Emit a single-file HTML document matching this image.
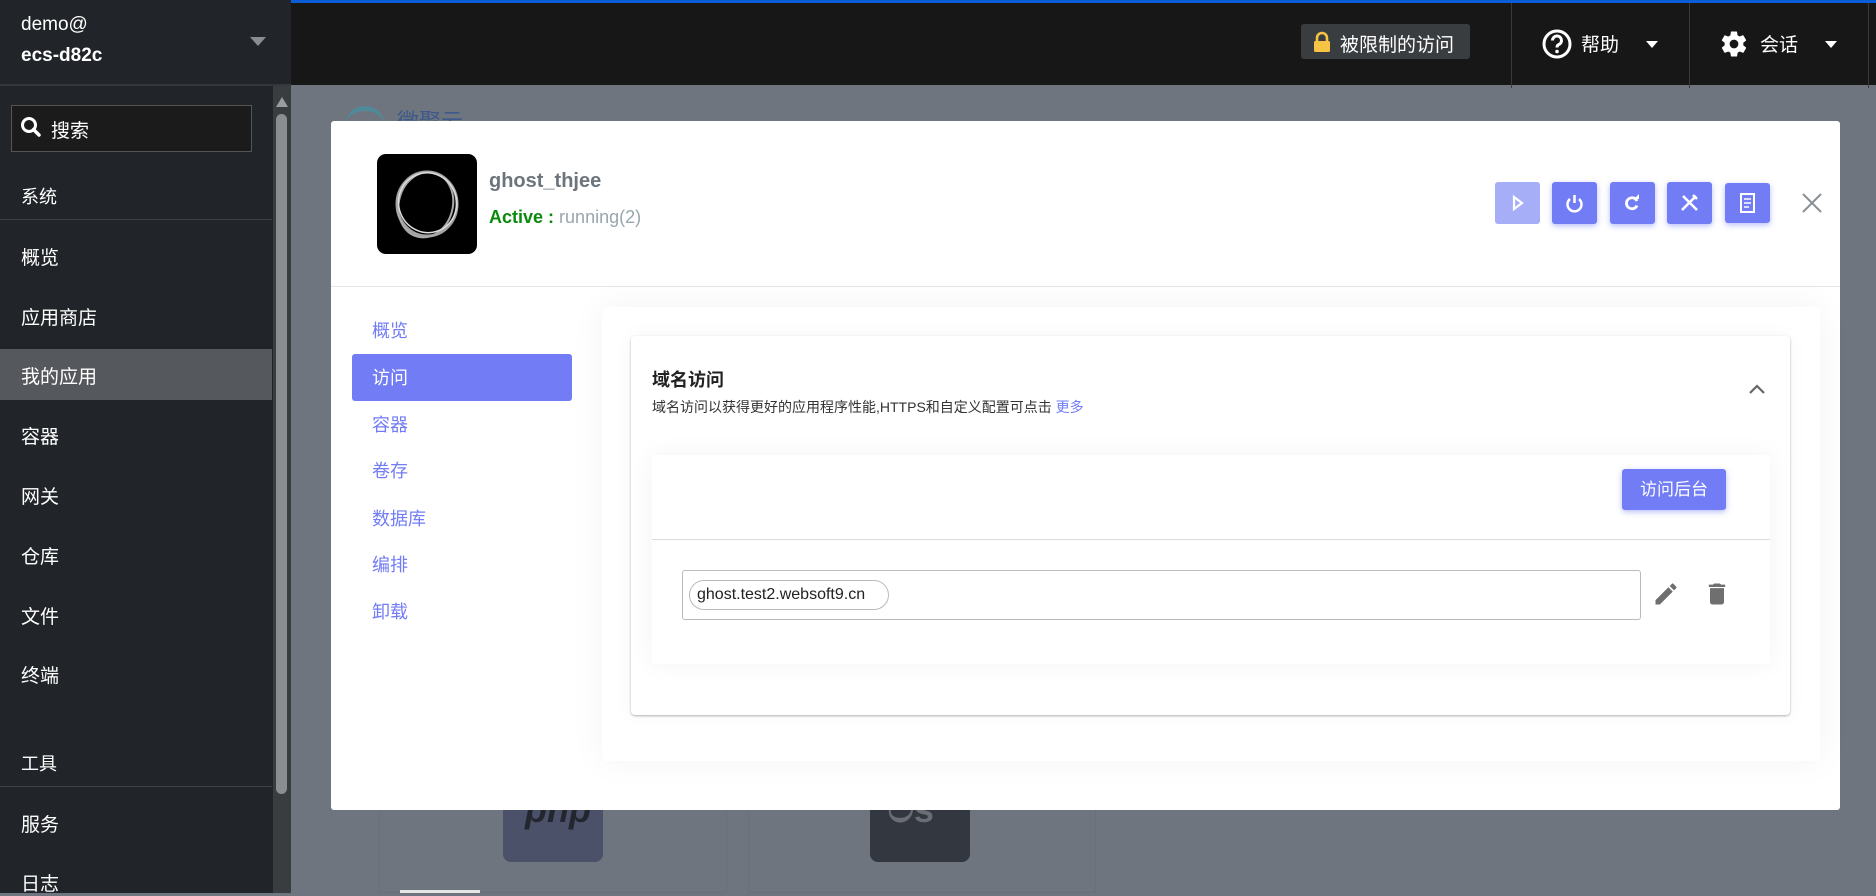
<!DOCTYPE html>
<html><head><meta charset="utf-8"><style>
*{box-sizing:border-box;margin:0;padding:0}
body{width:1876px;height:893px;overflow:hidden;background:#6e757e;font-family:"Liberation Sans","Noto Sans CJK SC",sans-serif;position:relative}
.abs{position:absolute}
#side{left:0;top:0;width:291px;height:893px;background:#212529}
#side .t{position:absolute;left:21px;color:#fff;font-size:19px}
#hdr{left:291px;top:0;width:1585px;height:85px;background:#171717;border-top:3px solid #0b5ed7}
.sep{position:absolute;top:0;width:1px;height:85px;background:#3a3a3a}
.btn{position:absolute;top:182px;width:45px;height:42px;background:#727cf5;border-radius:3px;box-shadow:0 2px 6px rgba(114,124,245,.5)}
.nav{position:absolute;left:372px;color:#727cf5;font-size:18px}
</style></head><body>
<div id="side" class="abs">
 <div class="t" style="top:14px;font-size:19px">demo@</div>
 <div class="t" style="top:45px;font-size:19px;font-weight:bold">ecs-d82c</div>
 <div class="abs" style="left:250px;top:37px;border-left:8px solid transparent;border-right:8px solid transparent;border-top:9px solid #8a8d90"></div>
 <div class="abs" style="left:0;top:84px;width:291px;height:2px;background:#34383c"></div>
 <div class="abs" style="left:11px;top:105px;width:241px;height:47px;border:1px solid #555;background:#1b1b1b"></div>
 <svg class="abs" style="left:20px;top:116px" width="22" height="22" viewBox="0 0 22 22"><circle cx="9" cy="9" r="6.5" fill="none" stroke="#fff" stroke-width="3"/><path d="M13.5 13.5 L19 19" stroke="#fff" stroke-width="3.5" stroke-linecap="round"/></svg>
 <div class="t" style="left:51px;top:116px;font-size:19px">搜索</div>
 <div class="t" style="top:183px;font-size:18px">系统</div>
 <div class="abs" style="left:0;top:219px;width:272px;height:1px;background:#3e4246"></div>
 <div class="abs" style="left:0;top:349px;width:272px;height:51px;background:#55585c"></div>
 <div class="t" style="top:243px">概览</div>
 <div class="t" style="top:303px">应用商店</div>
 <div class="t" style="top:362px">我的应用</div>
 <div class="t" style="top:422px">容器</div>
 <div class="t" style="top:482px">网关</div>
 <div class="t" style="top:542px">仓库</div>
 <div class="t" style="top:602px">文件</div>
 <div class="t" style="top:661px">终端</div>
 <div class="t" style="top:750px;font-size:18px">工具</div>
 <div class="abs" style="left:0;top:786px;width:272px;height:1px;background:#3e4246"></div>
 <div class="t" style="top:810px">服务</div>
 <div class="t" style="top:869px">日志</div>
 <div class="abs" style="left:273px;top:86px;width:18px;height:807px;background:#3a3d40"></div>
 <div class="abs" style="left:276px;top:97px;border-left:6px solid transparent;border-right:6px solid transparent;border-bottom:10px solid #9a9da0"></div>
 <div class="abs" style="left:276px;top:114px;width:11px;height:680px;background:#8b8e91;border-radius:6px"></div>
</div>
<div id="hdr" class="abs">
 <div class="abs" style="left:1010px;top:21px;width:169px;height:35px;background:#3a3d40;border-radius:3px"></div>
 <svg class="abs" style="left:1021px;top:28px" width="20" height="22" viewBox="0 0 20 22"><path d="M5 10V7a5 5 0 0 1 10 0v3" fill="none" stroke="#f6c344" stroke-width="2.6"/><rect x="2" y="10" width="16" height="11" rx="1.5" fill="#f6c344"/></svg>
 <div class="abs" style="left:1049px;top:27px;color:#fff;font-size:19px">被限制的访问</div>
 <div class="sep" style="left:1220px"></div>
 <svg class="abs" style="left:1250px;top:25px" width="32" height="32" viewBox="0 0 32 32"><circle cx="16" cy="16" r="13" fill="none" stroke="#fff" stroke-width="3"/><path d="M11.5 12.5a4.5 4.5 0 1 1 6 4.2c-1.2.5-1.5 1.3-1.5 2.8" fill="none" stroke="#fff" stroke-width="3"/><circle cx="16" cy="23.5" r="1.8" fill="#fff"/></svg>
 <div class="abs" style="left:1290px;top:27px;color:#fff;font-size:19px">帮助</div>
 <div class="abs" style="left:1355px;top:38px;border-left:6px solid transparent;border-right:6px solid transparent;border-top:7px solid #fff"></div>
 <div class="sep" style="left:1398px"></div>
 <svg class="abs" style="left:1428px;top:25px" width="30" height="32" viewBox="0 0 24 24"><path fill="#fff" d="M19.4 13c.04-.3.06-.6.06-1s-.02-.7-.07-1l2.1-1.65c.2-.15.25-.42.12-.64l-2-3.46c-.12-.22-.39-.3-.61-.22l-2.49 1c-.52-.4-1.08-.73-1.69-.98l-.38-2.65A.49.49 0 0 0 14 2h-4c-.25 0-.46.18-.49.42l-.38 2.65c-.61.25-1.17.59-1.69.98l-2.49-1a.5.5 0 0 0-.61.22l-2 3.46c-.13.22-.07.49.12.64L4.57 11c-.04.3-.07.66-.07 1s.03.7.07 1l-2.11 1.65c-.19.15-.24.42-.12.64l2 3.46c.12.22.39.3.61.22l2.49-1c.52.4 1.08.73 1.69.98l.38 2.65c.03.24.24.42.49.42h4c.25 0 .46-.18.49-.42l.38-2.65c.61-.25 1.17-.59 1.69-.98l2.49 1c.23.09.49 0 .61-.22l2-3.46c.12-.22.07-.49-.12-.64L19.4 13zM12 15.5A3.5 3.5 0 1 1 12 8.5a3.5 3.5 0 0 1 0 7z"/></svg>
 <div class="abs" style="left:1469px;top:27px;color:#fff;font-size:19px">会话</div>
 <div class="abs" style="left:1534px;top:38px;border-left:6px solid transparent;border-right:6px solid transparent;border-top:7px solid #fff"></div>
 <div class="sep" style="left:1577px"></div>
</div>
<!-- background content -->
<div class="abs" style="left:345px;top:106px;width:40px;height:20px;border-top:5px solid #4f8a9a;border-radius:20px 20px 0 0"></div>
<div class="abs" style="left:397px;top:104px;color:#3d5a8a;font-size:22px">微聚云</div>
<div class="abs" style="left:379px;top:810px;width:348px;height:83px;border:1px solid #6a7079;border-top:none"></div>
<div class="abs" style="left:748px;top:810px;width:348px;height:83px;border:1px solid #6a7079;border-top:none"></div>
<div class="abs" style="left:503px;top:790px;width:100px;height:72px;background:#4a5168;border-radius:0 0 8px 8px;color:#23262f;font-size:36px;font-style:italic;font-weight:bold;padding:0 0 0 22px;line-height:40px">php</div>
<div class="abs" style="left:870px;top:790px;width:100px;height:72px;background:#33373f;border-radius:0 0 8px 8px;color:#6a6d73;font-size:36px;font-weight:bold;padding-left:18px;line-height:40px">ටs</div>
<div class="abs" style="left:400px;top:890px;width:80px;height:3px;background:#e5e5e5"></div>
<!-- modal -->
<div class="abs" style="left:331px;top:121px;width:1509px;height:689px;background:#fff;border-radius:3px">
 <div class="abs" style="left:46px;top:33px;width:100px;height:100px;background:#000;border-radius:9px"></div>
 <svg class="abs" style="left:46px;top:33px" width="100" height="100" viewBox="0 0 100 100"><ellipse cx="50" cy="50" rx="30" ry="32" fill="none" stroke="#ccc" stroke-width="3" opacity=".8"/><ellipse cx="49" cy="51" rx="27" ry="33" fill="none" stroke="#aaa" stroke-width="2" transform="rotate(15 50 50)"/><ellipse cx="51" cy="49" rx="29" ry="30" fill="none" stroke="#ddd" stroke-width="1.5" transform="rotate(-20 50 50)"/></svg>
 <div class="abs" style="left:158px;top:49px;color:#6c757d;font-size:20px;font-weight:bold">ghost_thjee</div>
 <div class="abs" style="left:158px;top:86px;font-size:18px"><b style="color:#0a8a0a">Active :</b> <span style="color:#98a6ad">running(2)</span></div>
 <div class="btn" style="left:1164px;top:61px;background:#a7aef8;box-shadow:none"><svg width="45" height="42"><path d="M19 15 L27 21 L19 27Z" fill="none" stroke="#fff" stroke-width="2.2"/></svg></div>
 <div class="btn" style="left:1221px;top:61px"><svg width="45" height="42"><path d="M18 17a7 7 0 1 0 9 0" fill="none" stroke="#fff" stroke-width="2.5"/><path d="M22.5 13v8" stroke="#fff" stroke-width="2.5"/></svg></div>
 <div class="btn" style="left:1279px;top:61px"><svg width="45" height="42"><path d="M27 19a5.5 5.5 0 1 0 0 4.5" fill="none" stroke="#fff" stroke-width="2.8"/><path d="M24 17h5v-5z" fill="#fff"/></svg></div>
 <div class="btn" style="left:1336px;top:61px"><svg width="45" height="42"><path d="M16 14l14 14M29 14L15 28M26 13l4 4" stroke="#fff" stroke-width="2.6"/></svg></div>
 <div class="btn" style="left:1394px;top:62px;height:40px"><svg width="45" height="40"><rect x="16" y="11" width="13" height="18" fill="none" stroke="#fff" stroke-width="2"/><path d="M19 16h7M19 20h7M19 24h5" stroke="#fff" stroke-width="1.6"/></svg></div>
 <svg class="abs" style="left:1470px;top:71px" width="22" height="22"><path d="M2 2L20 20M20 2L2 20" stroke="#8a8f95" stroke-width="2"/></svg>
 <div class="abs" style="left:0;top:165px;width:1509px;height:1px;background:#e3e5e8"></div>
 <div class="abs" style="left:21px;top:233px;width:220px;height:47px;background:#727cf5;border-radius:3px"></div>
 <div class="nav" style="left:41px;top:196px">概览</div>
 <div class="nav" style="left:41px;top:243px;color:#fff">访问</div>
 <div class="nav" style="left:41px;top:290px">容器</div>
 <div class="nav" style="left:41px;top:336px">卷存</div>
 <div class="nav" style="left:41px;top:384px">数据库</div>
 <div class="nav" style="left:41px;top:430px">编排</div>
 <div class="nav" style="left:41px;top:477px">卸载</div>
 <div class="abs" style="left:271px;top:186px;width:1218px;height:454px;background:#fff;box-shadow:0 0 35px rgba(0,0,0,.05);border-radius:4px"></div>
 <div class="abs" style="left:300px;top:215px;width:1159px;height:379px;background:#fff;border-radius:4px;box-shadow:0 1px 2px rgba(0,0,0,.3),0 0 20px rgba(0,0,0,.04)">
  <div class="abs" style="left:21px;top:30px;font-size:18px;font-weight:bold;color:#222">域名访问</div>
  <div class="abs" style="left:21px;top:61px;font-size:14px;color:#333">域名访问以获得更好的应用程序性能,HTTPS和自定义配置可点击 <span style="color:#727cf5">更多</span></div>
  <svg class="abs" style="left:1117px;top:47px" width="18" height="12"><path d="M2 10L9 3L16 10" fill="none" stroke="#666" stroke-width="2.2"/></svg>
  <div class="abs" style="left:21px;top:119px;width:1118px;height:209px;background:#fff;box-shadow:0 0 25px rgba(0,0,0,.05);border-radius:3px">
   <div class="abs" style="left:970px;top:14px;width:104px;height:41px;background:#727cf5;border-radius:3px;color:#fff;font-size:17px;text-align:center;line-height:41px;box-shadow:0 2px 6px rgba(114,124,245,.5)">访问后台</div>
   <div class="abs" style="left:0;top:84px;width:1118px;height:1px;background:#dcdcdc"></div>
   <div class="abs" style="left:30px;top:115px;width:959px;height:50px;border:1px solid #bbb;border-radius:3px"></div>
   <div class="abs" style="left:37px;top:125px;width:200px;height:30px;border:1px solid #bbb;border-radius:15px;font-size:16px;color:#222;line-height:28px;padding-left:7px">ghost.test2.websoft9.cn</div>
   <svg class="abs" style="left:1000px;top:125px" width="28" height="28" viewBox="0 0 24 24"><path fill="#6f6f6f" d="M3 17.25V21h3.75L17.81 9.94l-3.75-3.75L3 17.25zM20.71 7.04a1 1 0 0 0 0-1.41l-2.34-2.34a1 1 0 0 0-1.41 0l-1.83 1.83 3.75 3.75 1.83-1.83z"/></svg>
   <svg class="abs" style="left:1051px;top:124px" width="28" height="30" viewBox="0 0 24 24"><path fill="#6f6f6f" d="M6 19c0 1.1.9 2 2 2h8c1.1 0 2-.9 2-2V7H6v12zM19 4h-3.5l-1-1h-5l-1 1H5v2h14V4z"/></svg>
  </div>
 </div>
</div>
</body></html>
